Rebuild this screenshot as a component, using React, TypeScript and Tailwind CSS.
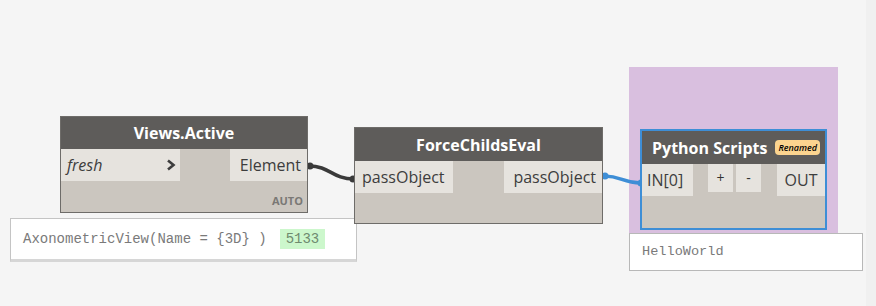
import React from "react";

const sans = { fontFamily: '"Open Sans", "Noto Sans", sans-serif' };
const mono = { fontFamily: '"Liberation Mono", "DejaVu Sans Mono", monospace' };

function Port({ children, className = "" }: { children: React.ReactNode; className?: string }) {
  return (
    <div className={`h-[32px] flex items-center bg-[#e6e3de] text-[16px] text-[#3d3d3d] ${className}`}>
      {children}
    </div>
  );
}

export default function App() {
  return (
    <div className="relative w-[876px] h-[306px] overflow-hidden bg-[#f5f5f5]" style={sans}>
      <div className="absolute right-0 top-0 w-[10px] h-full bg-[#f0f0f0]" />

      {/* Group */}
      <div className="absolute left-[629px] top-[67px] w-[209px] h-[166px] bg-[#d9bfdf]" />

      {/* wires */}
      <svg className="absolute left-0 top-0" width="876" height="306">
        <path d="M309 166 C 330 166, 332 179, 354 179" stroke="#3a3a3a" strokeWidth="3.5" fill="none" />
        <circle cx="310" cy="166" r="3.5" fill="#3a3a3a" />
        <circle cx="353" cy="179" r="3.5" fill="#3a3a3a" />
        <path d="M604 176 C 622 176, 622 183, 641 183" stroke="#3e8ed6" strokeWidth="3.5" fill="none" />
        <circle cx="605" cy="176" r="3.5" fill="#3e8ed6" />
        <circle cx="641" cy="183" r="3.5" fill="#3e8ed6" />
      </svg>

      {/* Views.Active */}
      <div className="absolute left-[60px] top-[116px] w-[248px] h-[97px] border border-[#6e6c69] bg-[#cbc6bf] flex flex-col">
        <div className="h-[32px] bg-[#5e5c5a] flex items-center justify-center text-white font-bold text-[16px]">
          Views.Active
        </div>
        <div className="flex justify-between">
          <Port className="w-[119px] justify-between pl-[6px] pr-[4px]">
            <span className="italic">fresh</span>
            <svg width="10" height="12" viewBox="0 0 10 12">
              <path d="M2 1.5 L7.5 6 L2 10.5" stroke="#3d3d3d" strokeWidth="2.6" fill="none" />
            </svg>
          </Port>
          <Port className="w-[77px] justify-end pr-[6px]">Element</Port>
        </div>
        <div className="flex-1 flex items-end justify-end pr-[4px] pb-[3px] text-[11px] font-bold text-[#7a7875]">
          AUTO
        </div>
      </div>

      {/* preview 1 */}
      <div className="absolute left-[10px] top-[218px] w-[347px] h-[44px] bg-white border border-[#c4c4c4] border-b-[3px] border-b-[#d6d6d6] flex items-center pl-[12px] text-[14px] text-[#7a7a7a]" style={mono}>
        <span>AxonometricView(Name = {"{3D}"} )</span>
        <span className="ml-[13px] px-[6px] bg-[#ccf7cc] leading-[20px] text-[#6f8a6f]">5133</span>
      </div>

      {/* ForceChildsEval */}
      <div className="absolute left-[354px] top-[127px] w-[249px] h-[97px] border border-[#6e6c69] bg-[#cbc6bf] flex flex-col">
        <div className="h-[33px] bg-[#5e5c5a] flex items-center justify-center text-white font-bold text-[16px]">
          ForceChildsEval
        </div>
        <div className="flex justify-between">
          <Port className="w-[98px] pl-[7px] h-[31px]">passObject</Port>
          <Port className="w-[98px] justify-end pr-[6px] h-[31px]">passObject</Port>
        </div>
      </div>

      {/* Python Scripts */}
      <div className="absolute left-[640px] top-[129px] w-[187px] h-[101px] border-[2px] border-[#3e8ed6] bg-[#cbc6bf] flex flex-col">
        <div className="h-[33px] bg-[#5e5c5a] flex items-center pl-[10px] text-white font-bold text-[16px]">
          <span>Python Scripts</span>
          <span className="ml-[8px] h-[15px] px-[3px] rounded-[4px] bg-[#fcd48f] text-black italic font-semibold text-[9px] flex items-center">
            Renamed
          </span>
        </div>
        <div className="flex items-start">
          <Port className="w-[51px] pl-[5px]">IN[0]</Port>
          <div className="flex gap-[3px] ml-[15px]">
            <div className="w-[25px] h-[28px] bg-[#e6e3de] flex items-start justify-center pt-[3px] text-[14px] text-[#333]">+</div>
            <div className="w-[25px] h-[28px] bg-[#e6e3de] flex items-start justify-center pt-[3px] text-[14px] text-[#333]">-</div>
          </div>
          <Port className="w-[48px] ml-auto justify-center">OUT</Port>
        </div>
      </div>

      {/* preview 2 */}
      <div className="absolute left-[629px] top-[233px] w-[234px] h-[38px] bg-white border border-[#b8b8b8] flex items-center pl-[12px] text-[13.6px] text-[#7a7a7a]" style={mono}>
        HelloWorld
      </div>
    </div>
  );
}
